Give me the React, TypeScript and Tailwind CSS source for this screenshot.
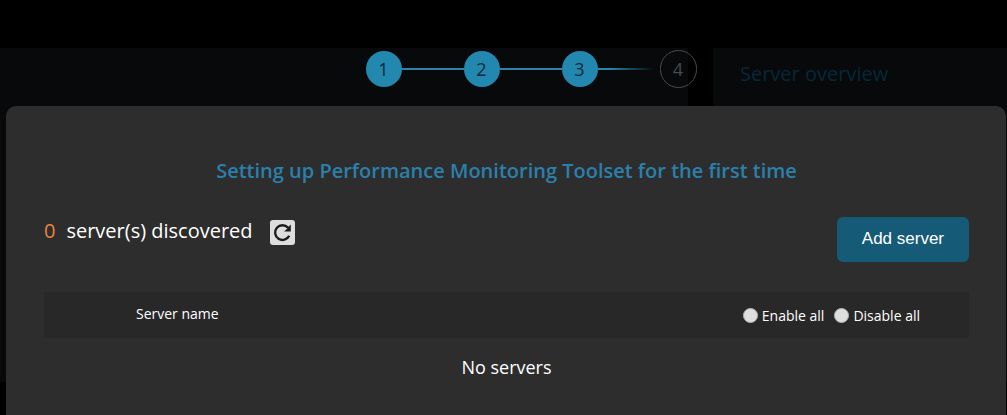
import React, { useState } from 'react';

const steps = [1, 2, 3, 4];
const currentStep = 3;

const RefreshIcon: React.FC = () => (
  <svg viewBox="0 0 25 25" className="h-full w-full" aria-hidden="true">
    <path d="M18 7.6A7.4 7.4 0 1 0 19.2 15.8" fill="none" stroke="#1c1c1c" strokeWidth="2.4" />
    <path d="M20.8 4.6V11.6H14L16.6 9.2L18.4 7Z" fill="#1c1c1c" />
  </svg>
);

const Stepper: React.FC = () => (
  <ol className="flex items-center justify-center pl-[55px] text-lg">
    {steps.map((step) => (
      <React.Fragment key={step}>
        {step > 1 && (
          <li
            aria-hidden="true"
            className={
              step > currentStep
                ? 'h-[2px] w-[62px] bg-linear-to-r from-[#2487ae] from-20% to-transparent to-90%'
                : 'h-[2px] w-[62px] bg-[#2b83a8]'
            }
          />
        )}
        <li
          className={
            step > currentStep
              ? 'flex h-[38px] w-[37px] items-center justify-center rounded-full border border-[#4a4a4a] text-[#4a4a4a]'
              : 'flex h-9 w-9 items-center justify-center rounded-full bg-[#2288b0] text-[#0b2a38]'
          }
        >
          {step}
        </li>
      </React.Fragment>
    ))}
  </ol>
);

const SetupDialog: React.FC = () => {
  const [mode, setMode] = useState<string>('');

  return (
    <div
      role="dialog"
      aria-labelledby="setup-title"
      className="ml-[6px] mr-px flex-1 rounded-t-[10px] bg-[#2d2d2d] pt-[50px] pr-[37px] pl-[38px] text-white"
    >
      <h1 id="setup-title" className="text-center text-xl leading-[30px] font-semibold text-[#2b80ab]">
        Setting up Performance Monitoring Toolset for the first time
      </h1>

      <div className="mt-[31px] flex items-start justify-between">
        <div className="flex items-center text-xl leading-7">
          <span className="text-[#e8833f]">0</span>
          <span className="ml-[11px]">server(s) discovered</span>
          <button
            type="button"
            aria-label="Refresh"
            className="mt-[3px] ml-[17px] h-[25px] w-[25px] rounded-[3px] bg-[#dedede]"
          >
            <RefreshIcon />
          </button>
        </div>
        <button
          type="button"
          className="h-[45px] rounded-md bg-[#155b78] px-[25px] pb-[2px] font-['Liberation_Sans',Arial,sans-serif] text-[17px]"
        >
          Add server
        </button>
      </div>

      <table className="mt-[30px] w-full">
        <thead>
          <tr className="h-[46px] bg-[#282828] text-sm">
            <th className="w-1/2 pb-[3px] pl-[92px] text-left font-normal">Server name</th>
            <th className="pt-px pr-[49px] font-normal">
              <div className="flex items-center justify-end gap-[10px]">
                {['Enable all', 'Disable all'].map((label) => (
                  <label key={label} className="flex items-center gap-1">
                    <input
                      type="radio"
                      name="servers"
                      checked={mode === label}
                      onChange={() => setMode(label)}
                      className="h-[15px] w-[15px] appearance-none rounded-full border border-[#b5b5b5] bg-[#dedede] checked:border-4 checked:border-[#dedede] checked:bg-[#444444]"
                    />
                    {label}
                  </label>
                ))}
              </div>
            </th>
          </tr>
        </thead>
        <tbody>
          <tr>
            <td colSpan={2} className="h-[58px] text-center text-lg">
              No servers
            </td>
          </tr>
        </tbody>
      </table>
    </div>
  );
};

const App: React.FC = () => {
  return (
    <div className="relative min-h-screen overflow-hidden bg-black pt-12 font-['Open_Sans','Noto_Sans',sans-serif]">
      {/* Dashboard dimmed behind the dialog */}
      <main className="flex h-[334px] gap-[25px]">
        <section className="flex-1 bg-[#07090b]" />
        <aside className="w-[294px] bg-[#07090b] px-[27px] pt-[11px]">
          <h2 className="text-xl leading-[30px] text-[#06283a]">Server overview</h2>
        </aside>
      </main>

      {/* Setup wizard on top of the page */}
      <div className="absolute inset-0 flex flex-col gap-[18px] pt-[50px]">
        <Stepper />
        <SetupDialog />
      </div>
    </div>
  );
};

export default App;
